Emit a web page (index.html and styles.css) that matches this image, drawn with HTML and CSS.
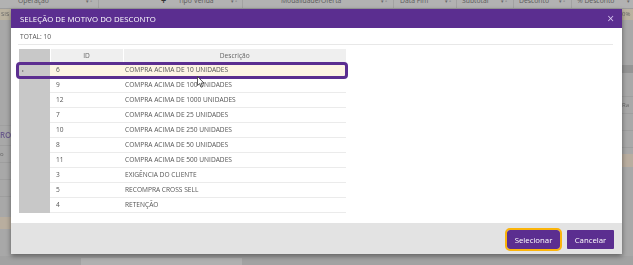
FILE: index.html
```html
<!DOCTYPE html>
<html lang="pt-BR">
<head>
  <meta charset="UTF-8">
  <title>Seleção de motivo do desconto</title>
  <link rel="stylesheet" href="styles.css">
</head>
<body>

  <!-- tela de fundo, escurecida pelo modal -->
  <div class="app">
    <div class="toolbar">
      <div class="tb-seg seg-op"><span class="tb">Operação</span><span class="tb-ico">▾ ▫</span></div>
      <div class="tb-seg seg-tipo"><span class="tb plus">+</span><span class="tb">Tipo Venda</span><span class="tb-ico">▾ ▫</span></div>
      <div class="tb-seg seg-mod"><span class="tb">Modalidade/Oferta</span><span class="tb-ico">▾ ▫</span></div>
      <div class="tb-seg seg-data"><span class="tb">Data Fim</span><span class="tb-ico">▾ ▫</span></div>
      <div class="tb-seg seg-sub"><span class="tb">Subtotal</span><span class="tb-ico">▾ ▫</span></div>
      <div class="tb-seg seg-desc"><span class="tb">Desconto</span><span class="tb-ico">▾ ▫</span></div>
      <div class="tb-seg seg-pct"><span class="tb">% Desconto</span><span class="tb-ico">▾</span></div>
    </div>
    <div class="app-main">
      <div class="side side-left">
        <div class="band beige">SIS</div>
        <div class="band tall"></div>
        <div class="band ro">RO</div>
        <div class="band line">o</div>
        <div class="band line"></div>
        <div class="band line"></div>
        <div class="band peach"></div>
      </div>
      <div class="side side-right">
        <div class="band beige">0%</div>
        <div class="band gap1"></div>
        <div class="band dark"></div>
        <div class="band line gap2"></div>
        <div class="band line">Ra</div>
        <div class="band line"></div>
        <div class="band line"></div>
        <div class="band peach2"></div>
      </div>
    </div>
    <div class="app-bottom"><span class="bottom-tab"></span></div>
  </div>

  <div class="modal">
    <div class="modal-head">
      <span class="modal-title">SELEÇÃO DE MOTIVO DO DESCONTO</span>
      <span class="modal-close">×</span>
    </div>

    <div class="modal-body">
      <div class="total">TOTAL: 10</div>

      <div class="grid-wrap">
        <table class="grid">
          <thead>
            <tr><th class="ind"></th><th class="c-id">ID</th><th class="c-desc">Descrição</th></tr>
          </thead>
          <tbody>
            <tr class="sel"><td class="ind"><span class="arrow"></span></td><td>6</td><td>COMPRA ACIMA DE 10 UNIDADES</td></tr>
            <tr><td class="ind"></td><td>9</td><td>COMPRA ACIMA DE 100 UNIDADES</td></tr>
            <tr><td class="ind"></td><td>12</td><td>COMPRA ACIMA DE 1000 UNIDADES</td></tr>
            <tr><td class="ind"></td><td>7</td><td>COMPRA ACIMA DE 25 UNIDADES</td></tr>
            <tr><td class="ind"></td><td>10</td><td>COMPRA ACIMA DE 250 UNIDADES</td></tr>
            <tr><td class="ind"></td><td>8</td><td>COMPRA ACIMA DE 50 UNIDADES</td></tr>
            <tr><td class="ind"></td><td>11</td><td>COMPRA ACIMA DE 500 UNIDADES</td></tr>
            <tr><td class="ind"></td><td>3</td><td>EXIGÊNCIA DO CLIENTE</td></tr>
            <tr><td class="ind"></td><td>5</td><td>RECOMPRA CROSS SELL</td></tr>
            <tr><td class="ind"></td><td>4</td><td>RETENÇÃO</td></tr>
          </tbody>
        </table>
        <div class="focus-ring"></div>
        <svg class="cursor" width="8" height="12" viewBox="0 0 8 12">
          <path d="M0.5 0.5 L0.5 9.5 L2.6 7.6 L4.2 11.2 L5.6 10.6 L4.1 7.1 L7 7.1 Z" fill="#fff" stroke="#333" stroke-width="0.8" stroke-linejoin="round"/>
        </svg>
      </div>
    </div>

    <div class="modal-foot">
      <button class="btn btn-sel">Selecionar</button>
      <button class="btn btn-cancel">Cancelar</button>
    </div>
  </div>

</body>
</html>
```

FILE: styles.css
```css
* {
  box-sizing: border-box;
}

body {
  margin: 0;
  width: 633px;
  height: 265px;
  overflow: hidden;
  position: relative;
  background: #a8a8a8;
  font-family: "Open Sans", "Noto Sans", sans-serif;
}

/* ---- fundo ---- */
.app {
  height: 265px;
  display: flex;
  flex-direction: column;
  filter: blur(0.35px);
}

.toolbar {
  height: 9px;
  flex: none;
  display: flex;
  background: #b2b2b2;
  border-bottom: 1px solid #9c9c9c;
  overflow: hidden;
  font-size: 6.8px;
  color: #5a5a5a;
  white-space: nowrap;
}

.tb-seg {
  display: flex;
  align-items: flex-start;
  flex: none;
  padding-right: 6px;
  border-right: 1px solid #a2a2a2;
}

.tb {
  margin-top: -4px;
  line-height: 10px;
}

.tb-ico {
  margin-top: -4px;
  margin-left: auto;
  line-height: 10px;
  font-size: 5px;
  color: #6a6a6a;
}

.seg-op { width: 99px; padding-left: 18px; }
.seg-tipo { width: 144px; padding-left: 62px; padding-right: 5px; }
.seg-mod { width: 151px; padding-left: 38px; }
.seg-data { width: 63px; padding-left: 6px; padding-right: 5px; }
.seg-sub { width: 57px; padding-left: 5px; }
.seg-desc { width: 58px; padding-left: 5px; }
.seg-pct { width: 61px; padding-left: 5px; padding-right: 3px; border-right: none; }

.plus {
  margin-right: 12px;
  font-weight: bold;
  font-size: 9px;
  color: #333;
}

.app-main {
  flex: 1;
  display: flex;
  justify-content: space-between;
}

.side {
  width: 11px;
  display: flex;
  flex-direction: column;
  font-size: 6px;
  color: #666;
  overflow: hidden;
  white-space: nowrap;
}

.band {
  height: 17px;
  line-height: 17px;
  border-bottom: 1px solid #9e9e9e;
}

.beige {
  height: 11px;
  line-height: 11px;
  background: #bab2a0;
  border-bottom: none;
}

.side-left .beige {
  padding-left: 1px;
}

.tall {
  height: 106px;
  border-bottom: 1px solid #a0a0a0;
}

.ro {
  color: #6a5a8c;
  font-size: 8px;
  font-weight: 600;
  height: 20px;
}

.peach {
  height: 12px;
  margin-top: 20px;
  background: #b9ae9f;
  border-bottom: none;
}

.gap1 {
  height: 45px;
  border-bottom: none;
}

.dark {
  height: 8px;
  background: #949494;
  border-bottom: none;
}

.gap2 {
  height: 24px;
}

.peach2 {
  height: 13px;
  margin-top: 6px;
  background: #b9ad9f;
  border-bottom: none;
}

.app-bottom {
  height: 9px;
  flex: none;
  background: #a2a2a2;
  padding-top: 2px;
}

.bottom-tab {
  display: block;
  margin-left: 81px;
  width: 161px;
  height: 7px;
  background: #b0b0b0;
}

/* ---- modal ---- */
.modal {
  position: absolute;
  left: 11px;
  top: 9px;
  width: 611px;
  height: 245px;
  display: flex;
  flex-direction: column;
  background: #fff;
  box-shadow: 0 2px 5px rgba(0, 0, 0, 0.45);
}

.modal-head {
  height: 19px;
  flex: none;
  display: flex;
  align-items: center;
  justify-content: space-between;
  padding: 0 8px 0 9px;
  background: #5b2e90;
  color: #fff;
}

.modal-title {
  font-size: 7.8px;
  letter-spacing: 0.05px;
}

.modal-close {
  font-size: 12px;
  line-height: 11px;
  color: #d9c9f0;
}

.modal-body {
  flex: 1;
  padding: 0 9px 0 7px;
}

.total {
  height: 17px;
  padding: 4px 0 0 2px;
  font-size: 6.6px;
  line-height: 9px;
  color: #555;
  border-bottom: 1px solid #e8e8e8;
}

.grid-wrap {
  position: relative;
  width: 328px;
  margin: 4px 0 0 1px;
}

.grid {
  border-collapse: collapse;
  table-layout: fixed;
  width: 327px;
  font-size: 6.6px;
  color: #555;
}

.grid th {
  height: 13px;
  padding: 0;
  font-weight: normal;
  color: #666;
  background: #efefef;
  border-left: 1px solid #fff;
  border-bottom: 1px solid #fff;
}

.grid td {
  height: 15px;
  padding: 0 0 0 2px;
  border-bottom: 1px solid #ebebeb;
  white-space: nowrap;
}

.grid .ind {
  width: 31px;
  background: #c8c8c8;
  border-left: none;
  border-bottom-color: #c8c8c8;
}

.c-id {
  width: 73px;
}

.grid td:nth-child(2) {
  padding-left: 6px;
}

.sel td {
  background: #fdf4e4;
}

.sel td.ind {
  background: #c8c8c8;
}

.arrow {
  display: inline-block;
  width: 0;
  height: 0;
  margin-left: 1px;
  border-top: 1.5px solid transparent;
  border-bottom: 1.5px solid transparent;
  border-left: 2px solid #777;
}

.focus-ring {
  position: absolute;
  left: -3px;
  top: 13px;
  width: 332px;
  height: 17px;
  border: 3px solid #5b2e90;
  border-radius: 4px;
}

.cursor {
  position: absolute;
  left: 178px;
  top: 27px;
}

.modal-foot {
  height: 31px;
  flex: none;
  display: flex;
  justify-content: flex-end;
  align-items: center;
  gap: 7px;
  padding: 2px 8px 0 0;
  background: #e3e3e3;
}

.btn {
  height: 19px;
  padding: 0;
  border: none;
  border-radius: 1px;
  background: #5b2e90;
  color: #fff;
  font-family: "Open Sans", "Noto Sans", sans-serif;
  font-size: 7.8px;
}

.btn-sel {
  width: 53px;
  outline: 2.5px solid #fbb40a;
  border-radius: 3px;
}

.btn-cancel {
  width: 47px;
}
```
